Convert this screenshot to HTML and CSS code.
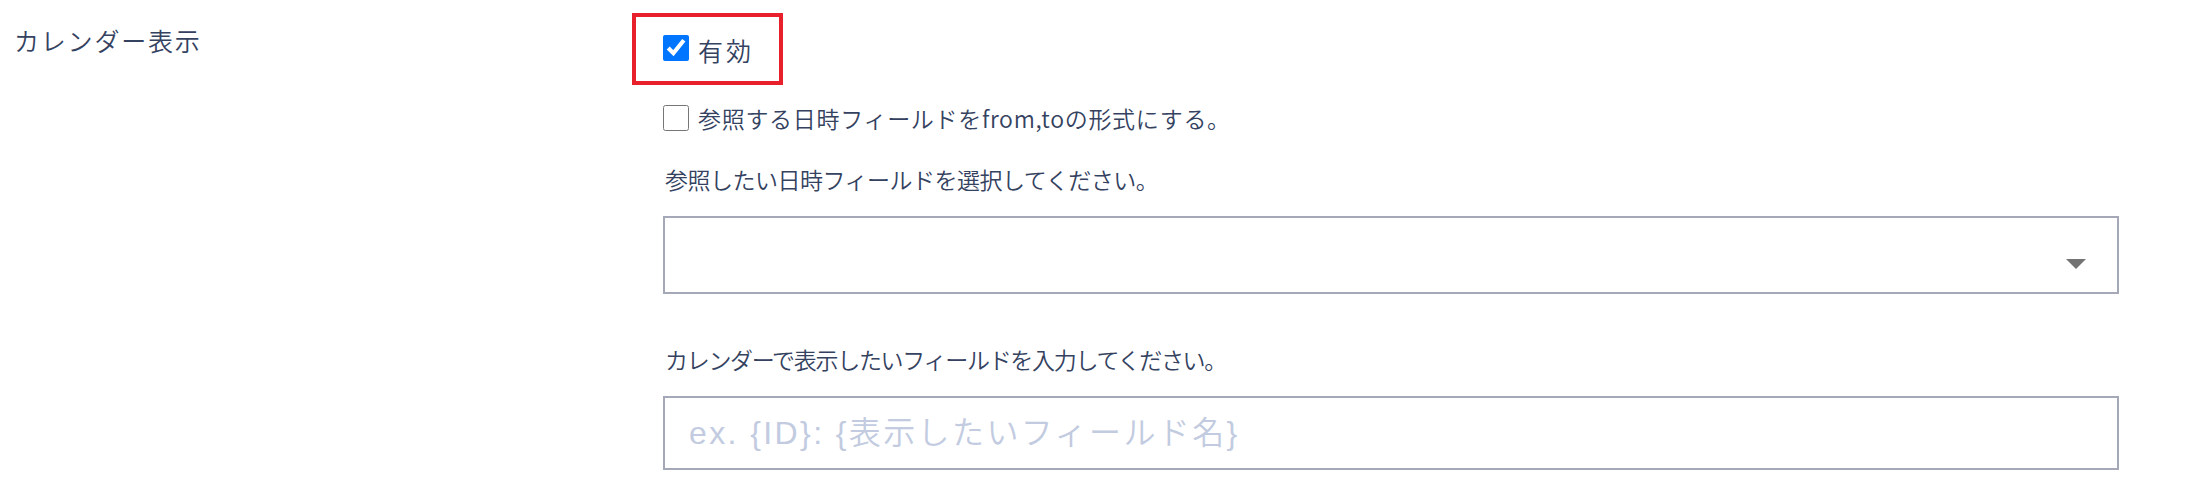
FILE: index.html
```html
<!DOCTYPE html>
<html lang="ja">
<head>
<meta charset="utf-8">
<title>カレンダー表示</title>
<link rel="stylesheet" href="styles.css">
</head>
<body>
<div class="page">
  <div class="label-col">カレンダー表示</div>
  <div class="control-col">
    <div class="check-row first">
      <input type="checkbox" class="cb" checked>
      <span class="cb-text enabled">有効</span>
      <div class="highlight"></div>
    </div>
    <div class="check-row second">
      <input type="checkbox" class="cb">
      <span class="cb-text fromto">参照する日時フィールドをfrom,toの形式にする。</span>
    </div>
    <div class="help first-help">参照したい日時フィールドを選択してください。</div>
    <div class="select">
      <svg class="caret" width="20" height="10" viewBox="0 0 20 10"><path d="M0 0 H20 L10 10 Z" fill="#737373"/></svg>
    </div>
    <div class="help second-help">カレンダーで表示したいフィールドを入力してください。</div>
    <input type="text" class="text-input" placeholder="ex. {ID}: {表示したいフィールド名}">
  </div>
</div>
</body>
</html>
```

FILE: styles.css
```css
html, body {
  margin: 0;
  padding: 0;
  background: #ffffff;
}
body {
  font-family: "Noto Sans CJK JP", "Noto Sans", sans-serif;
  font-weight: 350;
  color: #34425f;
}
.page {
  display: flex;
  width: 2206px;
}
.label-col {
  width: 649px;
  padding-left: 14px;
  padding-top: 23px;
  font-size: 25px;
  letter-spacing: 1.8px;
  line-height: 34px;
  flex: none;
}
.control-col {
  width: 1456px;
  display: flex;
  flex-direction: column;
}
.check-row {
  position: relative;
  display: flex;
  align-items: center;
  height: 26px;
}
.check-row.first {
  margin-top: 35px;
}
.check-row.second {
  margin-top: 44px;
}
.cb {
  width: 26px;
  height: 26px;
  margin: 0;
  flex: none;
}
.cb-text {
  margin-left: 9px;
  font-size: 23px;
  line-height: 26px;
}
.cb-text.enabled {
  font-size: 25px;
  letter-spacing: 3px;
  padding-top: 4px;
}
.cb-text.fromto {
  letter-spacing: 0.7px;
}
.highlight {
  position: absolute;
  left: -31px;
  top: -22px;
  width: 143px;
  height: 64px;
  border: 4px solid #e8202b;
}
.help {
  font-size: 23px;
  line-height: 32px;
  padding-left: 2px;
}
.first-help {
  margin-top: 32px;
  letter-spacing: -0.5px;
}
.second-help {
  margin-top: 49px;
  letter-spacing: -1.3px;
}
.select {
  margin-top: 21px;
  height: 74px;
  border: 2px solid #a5a9b7;
  display: flex;
  justify-content: flex-end;
  align-items: center;
  padding-right: 31px;
}
.caret {
  margin-top: 18px;
}
.text-input {
  margin: 21px 0 0 0;
  height: 74px;
  box-sizing: border-box;
  border: 2px solid #a5a9b7;
  border-radius: 0;
  padding: 0 0 0 24px;
  font-family: "Liberation Sans", "Noto Sans CJK JP", sans-serif;
  font-weight: 350;
  font-size: 32px;
  letter-spacing: 2.4px;
  color: #34425f;
  outline: none;
  width: 100%;
}
.text-input::placeholder {
  color: #c2cbdf;
}
```
